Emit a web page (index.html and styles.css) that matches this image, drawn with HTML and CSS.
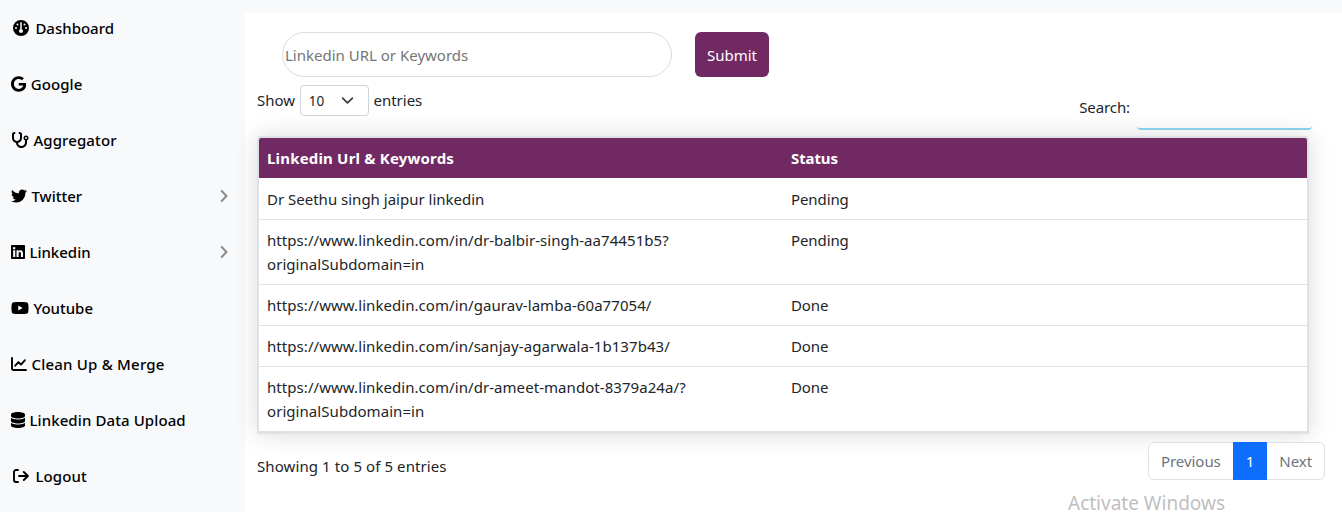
FILE: index.html
```
<!DOCTYPE html>
<html lang="en">
<head>
<meta charset="utf-8">
<title>Linkedin</title>
<link rel="stylesheet" href="styles.css">
</head>
<body>
<div class="layout">
  <nav class="sidebar">
    <a class="nav-item"><svg class="icon icon-fixed" viewBox="0 0 512 512"><path d="M0 256a256 256 0 1 1 512 0A256 256 0 1 1 0 256zm320 96c0-26.9-16.5-49.9-40-59.3V88c0-13.3-10.7-24-24-24s-24 10.7-24 24V292.7c-23.5 9.5-40 32.5-40 59.3c0 35.3 28.7 64 64 64s64-28.7 64-64zM144 176a32 32 0 1 0 0-64 32 32 0 1 0 0 64zm-16 80a32 32 0 1 0 -64 0 32 32 0 1 0 64 0zm288 32a32 32 0 1 0 0-64 32 32 0 1 0 0 64zM400 144a32 32 0 1 0 -64 0 32 32 0 1 0 64 0z"/></svg><span>Dashboard</span></a>
    <a class="nav-item"><svg class="icon" viewBox="0 0 488 512"><path d="M488 261.8C488 403.3 391.1 504 248 504 110.8 504 0 393.2 0 256S110.8 8 248 8c66.8 0 123 24.5 166.3 64.9l-67.5 64.9C258.5 52.6 94.3 116.6 94.3 256c0 86.5 69.1 156.6 153.7 156.6 98.2 0 135-70.4 140.8-106.9H248v-85.3h236.1c2.3 12.7 3.9 24.9 3.9 41.4z"/></svg><span class="wide">Google</span></a>
    <a class="nav-item"><svg class="icon" viewBox="0 0 576 512"><path d="M142.4 21.9c5.6 16.8-3.5 34.9-20.2 40.5L96 71.1V192c0 53 43 96 96 96s96-43 96-96V71.1l-26.1-8.7c-16.8-5.6-25.8-23.7-20.2-40.5s23.7-25.8 40.5-20.2l26.1 8.7C334.4 19.1 352 43.5 352 71.1V192c0 77.2-54.6 141.6-127.3 156.7C231 404.6 278.4 448 336 448c61.9 0 112-50.1 112-112V265.3c-28.3-12.3-48-40.5-48-73.3c0-44.2 35.8-80 80-80s80 35.8 80 80c0 32.8-19.7 61-48 73.3V336c0 97.2-78.8 176-176 176c-92.9 0-168.9-71.9-175.5-163.1C87.2 334.2 32 269.6 32 192V71.1c0-27.5 17.6-52 43.8-60.7l26.1-8.7c16.8-5.6 34.9 3.5 40.5 20.2zM480 224a32 32 0 1 0 0-64 32 32 0 1 0 0 64z"/></svg><span class="wide">Aggregator</span></a>
    <a class="nav-item"><svg class="icon" viewBox="0 0 512 512"><path d="M459.37 151.716c.325 4.548.325 9.097.325 13.645 0 138.72-105.583 298.558-298.558 298.558-59.452 0-114.68-17.219-161.137-47.106 8.447.974 16.568 1.299 25.34 1.299 49.055 0 94.213-16.568 130.274-44.832-46.132-.975-84.792-31.188-98.112-72.772 6.498.974 12.995 1.624 19.818 1.624 9.421 0 18.843-1.3 27.614-3.573-48.081-9.747-84.143-51.98-84.143-102.985v-1.299c13.969 7.797 30.214 12.67 47.431 13.319-28.264-18.843-46.781-51.005-46.781-87.391 0-19.492 5.197-37.36 14.294-52.954 51.655 63.675 129.3 105.258 216.365 109.807-1.624-7.797-2.599-15.918-2.599-24.04 0-57.828 46.782-104.934 104.934-104.934 30.213 0 57.502 12.67 76.67 33.137 23.715-4.548 46.456-13.32 66.599-25.34-7.798 24.366-24.366 44.833-46.132 57.827 21.117-2.273 41.584-8.122 60.426-16.243-14.292 20.791-32.161 39.308-52.628 54.253z"/></svg><span>Twitter</span><svg class="chevron" viewBox="0 0 8 14"><path d="M1.200 1.500 6.500 7l-5.300 5.500"/></svg></a>
    <a class="nav-item"><svg class="icon" viewBox="0 0 448 512"><path d="M416 32H31.9C14.3 32 0 46.5 0 64.3v383.4C0 465.5 14.3 480 31.9 480H416c17.6 0 32-14.5 32-32.3V64.3c0-17.8-14.4-32.3-32-32.3zM135.4 416H69V202.2h66.5V416zm-33.2-243c-21.3 0-38.5-17.3-38.5-38.5S80.900 96 102.2 96c21.2 0 38.5 17.3 38.5 38.5 0 21.3-17.2 38.5-38.5 38.5zm282.1 243h-66.4V312c0-24.8-.5-56.7-34.5-56.7-34.6 0-39.9 27-39.9 54.9V416h-66.4V202.2h63.7v29.2h.9c8.9-16.8 30.6-34.5 62.9-34.5 67.2 0 79.7 44.3 79.7 101.9V416z"/></svg><span>Linkedin</span><svg class="chevron" viewBox="0 0 8 14"><path d="M1.200 1.500 6.500 7l-5.300 5.500"/></svg></a>
    <a class="nav-item"><svg class="icon" viewBox="0 0 576 512"><path d="M549.655 124.083c-6.281-23.65-24.787-42.276-48.284-48.597C458.781 64 288 64 288 64S117.22 64 74.629 75.486c-23.497 6.322-42.003 24.947-48.284 48.597-11.412 42.867-11.412 132.305-11.412 132.305s0 89.438 11.412 132.305c6.281 23.65 24.787 41.5 48.284 47.821C117.22 448 288 448 288 448s170.78 0 213.371-11.486c23.497-6.321 42.003-24.171 48.284-47.821 11.412-42.867 11.412-132.305 11.412-132.305s0-89.438-11.412-132.305zm-317.51 213.508V175.185l142.739 81.205-142.739 81.201z"/></svg><span>Youtube</span></a>
    <a class="nav-item"><svg class="icon icon-line" viewBox="0 0 16 16"><path d="M1 2v10.500a1.500 1.500 0 0 0 1.500 1.500H15M4.200 9.700l3.300-3.600 2.500 2.500L14 4.200"/></svg><span class="wider">Clean Up &amp; Merge</span></a>
    <a class="nav-item"><svg class="icon" viewBox="0 0 448 512"><path d="M448 80v48c0 44.200-100.300 80-224 80S0 172.200 0 128V80C0 35.800 100.300 0 224 0S448 35.800 448 80zM393.200 214.700c20.800-7.400 39.900-16.900 54.800-28.600V288c0 44.200-100.300 80-224 80S0 332.200 0 288V186.100c14.900 11.800 34 21.200 54.800 28.600C99.700 230.700 159.500 240 224 240s124.300-9.300 169.200-25.300zM0 346.100c14.900 11.800 34 21.200 54.800 28.600C99.700 390.700 159.500 400 224 400s124.300-9.300 169.200-25.300c20.800-7.400 39.900-16.900 54.800-28.600V432c0 44.200-100.300 80-224 80S0 476.200 0 432V346.100z"/></svg><span class="wide">Linkedin Data Upload</span></a>
    <a class="nav-item"><svg class="icon icon-line icon-fixed" viewBox="0 0 16 16"><path d="M5 2H3a2 2 0 0 0-2 2v8a2 2 0 0 0 2 2h2M6 8h8.500M10.800 4 14.900 8l-4.100 4"/></svg><span class="wide">Logout</span></a>
  </nav>
  <main class="content">
    <form class="query"><input class="query-input" placeholder="Linkedin URL or Keywords"><button class="submit" type="button">Submit</button></form>
    <div class="controls">
      <div class="length"><span>Show</span><span class="select"><span>10</span><svg viewBox="0 0 16 16"><path d="m2 5 6 6 6-6"/></svg></span><span>entries</span></div>
      <label class="search"><span>Search:</span><input class="search-input"></label>
    </div>
    <table class="data">
      <thead><tr><th>Linkedin Url &amp; Keywords</th><th class="status">Status</th></tr></thead>
      <tbody>
        <tr><td class="plain">Dr Seethu singh jaipur linkedin</td><td class="status">Pending</td></tr>
        <tr><td>https://www.linkedin.com/in/dr-balbir-singh-aa74451b5?<br>originalSubdomain=in</td><td class="status">Pending</td></tr>
        <tr><td>https://www.linkedin.com/in/gaurav-lamba-60a77054/</td><td class="status">Done</td></tr>
        <tr><td>https://www.linkedin.com/in/sanjay-agarwala-1b137b43/</td><td class="status">Done</td></tr>
        <tr><td>https://www.linkedin.com/in/dr-ameet-mandot-8379a24a/?<br>originalSubdomain=in</td><td class="status">Done</td></tr>
      </tbody>
    </table>
    <div class="footer">
      <span class="info">Showing 1 to 5 of 5 entries</span>
      <div class="pager"><span class="page">Previous</span><span class="page active">1</span><span class="page">Next</span></div>
    </div>
  </main>
</div>
<div class="watermark">Activate Windows</div>
</body>
</html>
```
FILE: styles.css
```
* { box-sizing: border-box; }
body { margin: 0; height: 512px; overflow: hidden; background: #f8f9fb; color: #212529; font: 15px/24px "Noto Sans", "Open Sans", sans-serif; }
.layout { display: flex; height: 512px; }
.sidebar { width: 245px; flex: none; display: flex; flex-direction: column; }
.nav-item { display: flex; align-items: center; height: 56px; padding: 0 17px 0 11px; gap: 4.400px; color: #000; font-weight: 500; }
.wide { letter-spacing: 0.1px; }
.wider { letter-spacing: 0.22px; }
.icon { height: 16px; flex: none; fill: #000; }
.icon-fixed { margin: 0 2px; }
.icon-line { fill: none; stroke: #000; stroke-width: 1.900; stroke-linecap: round; stroke-linejoin: round; }
.chevron { width: 8px; height: 14px; margin-left: auto; fill: none; stroke: #868686; stroke-width: 1.900; }
.content { flex: 1; min-width: 0; margin-top: 13px; padding: 19px 17px 0 12px; background: #fff; }
.query { display: flex; gap: 23px; padding-left: 25px; }
.query-input { width: 390px; height: 45px; padding: 1px 2px; border: 1px solid #dcdcdc; border-radius: 23px; font: inherit; color: #212529; }
.query-input::placeholder { color: #757575; }
.submit { width: 74px; height: 45px; padding: 0; border: 0; border-radius: 6px; background: #702963; color: #fff; font: inherit; }
.controls { display: flex; justify-content: space-between; height: 59px; padding: 8px 13px 0 0; }
.length { display: flex; gap: 4.700px; height: 31px; align-items: center; line-height: 22px; padding-bottom: 1px; }
.length > span { flex: none; }
.select { display: flex; align-items: center; justify-content: space-between; width: 69px; height: 31px; margin-bottom: -1px; padding: 0 14px 0 8px; border: 1px solid #ced4da; border-radius: 4px; background: #fff; font-size: 13.500px; }
.select svg { width: 13px; height: 13px; fill: none; stroke: #343a40; stroke-width: 2; stroke-linecap: round; stroke-linejoin: round; }
.search { display: flex; gap: 7px; align-items: center; height: 45px; line-height: 22px; }
.search span { padding-bottom: 2px; letter-spacing: -0.1px; }
.search-input { width: 175px; height: 45px; border: 0; border-bottom: 2px solid #87ceeb; border-radius: 4px; background: transparent; }
.data { width: 1052px; table-layout: fixed; border-collapse: separate; border-spacing: 0; border: 2px solid #dee2e6; border-radius: 4px 4px 0 0; background: #fff; box-shadow: 0 0 24px rgba(0, 0, 0, .15); }
.data th { height: 41px; padding: 8px; background: #702963; background-clip: padding-box; border-bottom: 1px solid #fff; color: #fff; font-weight: 700; text-align: left; letter-spacing: 0.18px; }
.data th:first-child { border-top-left-radius: 2px; }
.data th:last-child { border-top-right-radius: 2px; }
.data td { padding: 8px; border-bottom: 1px solid #dee2e6; vertical-align: top; letter-spacing: 0.06px; }
.data td.plain { letter-spacing: 0; }
.data .status { letter-spacing: -0.1px; }
.footer { display: flex; justify-content: space-between; padding-top: 8px; }
.info { padding-top: 12px; letter-spacing: 0.09px; }
.pager { display: flex; height: 38px; border: 1px solid #dee2e6; border-radius: 6px; background: #fff; color: #6c757d; }
.page { padding: 6px 12px; letter-spacing: -0.05px; }
.page.active { margin: -1px 0; padding: 7px 13px; background: #0d6efd; color: #fff; }
.watermark { position: absolute; left: 1068px; top: 491px; color: #bfbfbf; font-size: 19px; line-height: 24px; height: 21px; white-space: nowrap; }
```
